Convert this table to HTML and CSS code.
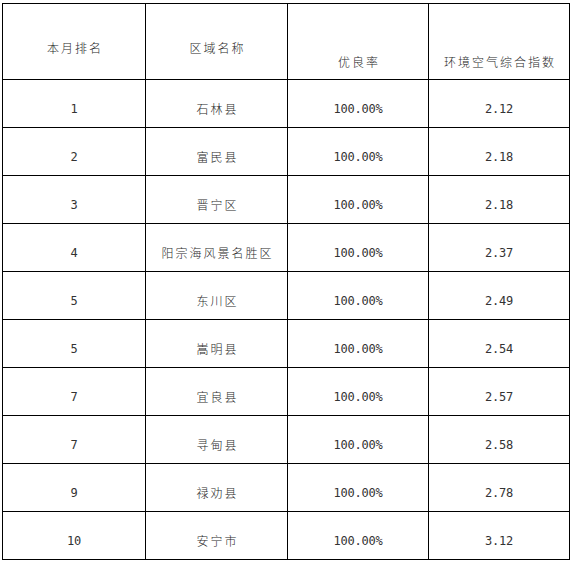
FILE: index.html
```html
<!DOCTYPE html>
<html lang="zh-CN">
<head>
<meta charset="utf-8">
<title>排名</title>
<link rel="stylesheet" href="styles.css">
</head>
<body>
<div class="table">
  <div class="cell head mid"><span class="cjk">本月排名</span></div>
  <div class="cell head mid"><span class="cjk">区域名称</span></div>
  <div class="cell head low"><span class="cjk">优良率</span></div>
  <div class="cell head low"><span class="cjk">环境空气综合指数</span></div>

  <div class="cell"><span class="num">1</span></div>
  <div class="cell"><span class="cjk">石林县</span></div>
  <div class="cell"><span class="num">100.00%</span></div>
  <div class="cell"><span class="num">2.12</span></div>

  <div class="cell"><span class="num">2</span></div>
  <div class="cell"><span class="cjk">富民县</span></div>
  <div class="cell"><span class="num">100.00%</span></div>
  <div class="cell"><span class="num">2.18</span></div>

  <div class="cell"><span class="num">3</span></div>
  <div class="cell"><span class="cjk">晋宁区</span></div>
  <div class="cell"><span class="num">100.00%</span></div>
  <div class="cell"><span class="num">2.18</span></div>

  <div class="cell"><span class="num">4</span></div>
  <div class="cell"><span class="cjk">阳宗海风景名胜区</span></div>
  <div class="cell"><span class="num">100.00%</span></div>
  <div class="cell"><span class="num">2.37</span></div>

  <div class="cell"><span class="num">5</span></div>
  <div class="cell"><span class="cjk">东川区</span></div>
  <div class="cell"><span class="num">100.00%</span></div>
  <div class="cell"><span class="num">2.49</span></div>

  <div class="cell"><span class="num">5</span></div>
  <div class="cell"><span class="cjk">嵩明县</span></div>
  <div class="cell"><span class="num">100.00%</span></div>
  <div class="cell"><span class="num">2.54</span></div>

  <div class="cell"><span class="num">7</span></div>
  <div class="cell"><span class="cjk">宜良县</span></div>
  <div class="cell"><span class="num">100.00%</span></div>
  <div class="cell"><span class="num">2.57</span></div>

  <div class="cell"><span class="num">7</span></div>
  <div class="cell"><span class="cjk">寻甸县</span></div>
  <div class="cell"><span class="num">100.00%</span></div>
  <div class="cell"><span class="num">2.58</span></div>

  <div class="cell"><span class="num">9</span></div>
  <div class="cell"><span class="cjk">禄劝县</span></div>
  <div class="cell"><span class="num">100.00%</span></div>
  <div class="cell"><span class="num">2.78</span></div>

  <div class="cell"><span class="num">10</span></div>
  <div class="cell"><span class="cjk">安宁市</span></div>
  <div class="cell"><span class="num">100.00%</span></div>
  <div class="cell"><span class="num">3.12</span></div>
</div>
</body>
</html>
```
FILE: styles.css
```css
html, body {
  margin: 0;
  padding: 0;
  background: #ffffff;
}

body {
  padding: 3px 0 0 2px;
  color: #2a2a2a;
  font-family: "Noto Sans CJK SC", sans-serif;
}

.table {
  width: 568px;
  display: grid;
  grid-template-columns: 142px 141px 140px 140px;
  grid-template-rows: 75px repeat(10, 47px);
  gap: 1px;
  padding: 1px;
  box-sizing: border-box;
  background: #000000;
}

.cell {
  background: #ffffff;
  display: flex;
  align-items: center;
  justify-content: center;
  padding-top: 10px;
  box-sizing: border-box;
}

.head.mid {
  padding-top: 12px;
}

.head.low {
  padding-top: 40px;
}

.cjk {
  font-family: "Noto Sans CJK SC", sans-serif;
  font-size: 12px;
  font-weight: 300;
  letter-spacing: 2px;
  padding-left: 2px;
  line-height: 14px;
}

.num {
  font-family: "DejaVu Sans Mono", monospace;
  font-size: 12px;
  letter-spacing: -0.2px;
  line-height: 14px;
  color: #333333;
}
```
